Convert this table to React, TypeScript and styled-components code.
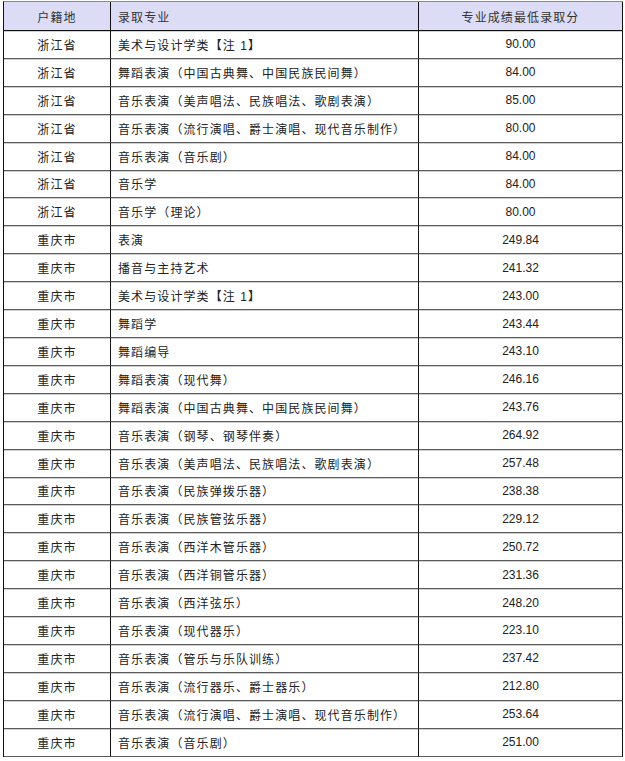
import React, { FC } from "react";
import styled, { createGlobalStyle } from "styled-components";

type Row = { place: string; major: string; score: string };

const ZJ = "浙江省";
const CQ = "重庆市";

const ROWS: Row[] = [
  { place: ZJ, major: "美术与设计学类【注 1】", score: "90.00" },
  { place: ZJ, major: "舞蹈表演（中国古典舞、中国民族民间舞）", score: "84.00" },
  { place: ZJ, major: "音乐表演（美声唱法、民族唱法、歌剧表演）", score: "85.00" },
  { place: ZJ, major: "音乐表演（流行演唱、爵士演唱、现代音乐制作）", score: "80.00" },
  { place: ZJ, major: "音乐表演（音乐剧）", score: "84.00" },
  { place: ZJ, major: "音乐学", score: "84.00" },
  { place: ZJ, major: "音乐学（理论）", score: "80.00" },
  { place: CQ, major: "表演", score: "249.84" },
  { place: CQ, major: "播音与主持艺术", score: "241.32" },
  { place: CQ, major: "美术与设计学类【注 1】", score: "243.00" },
  { place: CQ, major: "舞蹈学", score: "243.44" },
  { place: CQ, major: "舞蹈编导", score: "243.10" },
  { place: CQ, major: "舞蹈表演（现代舞）", score: "246.16" },
  { place: CQ, major: "舞蹈表演（中国古典舞、中国民族民间舞）", score: "243.76" },
  { place: CQ, major: "音乐表演（钢琴、钢琴伴奏）", score: "264.92" },
  { place: CQ, major: "音乐表演（美声唱法、民族唱法、歌剧表演）", score: "257.48" },
  { place: CQ, major: "音乐表演（民族弹拨乐器）", score: "238.38" },
  { place: CQ, major: "音乐表演（民族管弦乐器）", score: "229.12" },
  { place: CQ, major: "音乐表演（西洋木管乐器）", score: "250.72" },
  { place: CQ, major: "音乐表演（西洋铜管乐器）", score: "231.36" },
  { place: CQ, major: "音乐表演（西洋弦乐）", score: "248.20" },
  { place: CQ, major: "音乐表演（现代器乐）", score: "223.10" },
  { place: CQ, major: "音乐表演（管乐与乐队训练）", score: "237.42" },
  { place: CQ, major: "音乐表演（流行器乐、爵士器乐）", score: "212.80" },
  { place: CQ, major: "音乐表演（流行演唱、爵士演唱、现代音乐制作）", score: "253.64" },
  { place: CQ, major: "音乐表演（音乐剧）", score: "251.00" },
];

const GlobalStyle = createGlobalStyle`
  html, body {
    margin: 0;
    padding: 0;
    background: #ffffff;
  }
  body {
    font-family: "Liberation Sans", "Noto Sans CJK SC", sans-serif;
    font-size: 12px;
    color: #222;
  }
`;

const Page = styled.div`
  padding: 1px 0 0 3px;
`;

const Table = styled.table`
  width: 620px;
  table-layout: fixed;
  border-collapse: separate;
  border-spacing: 0;
  border-top: 1px solid #8a8a8a;
  border-left: 1px solid #111;
  box-shadow: 0 1px 0 #c4c4c4;
`;

const Col = styled.col<{ $w: number }>`
  width: ${(p) => p.$w}px;
`;

const HeadCell = styled.th<{ $align: "center" | "left" }>`
  height: 28px;
  padding: 0 0 0 ${(p) => (p.$align === "left" ? "7px" : "0")};
  background: #dcdcf6;
  font-weight: normal;
  text-align: ${(p) => p.$align};
  letter-spacing: 1.1px;
  color: #333;
  border-right: 1px solid #111;
  border-bottom: 1px solid #111;
`;

const Cell = styled.td<{ $align: "center" | "left"; $spaced?: boolean }>`
  height: 26.92px;
  padding: 0 0 0 ${(p) => (p.$align === "left" ? "7px" : "0")};
  text-align: ${(p) => p.$align};
  letter-spacing: ${(p) => (p.$spaced ? "1.1px" : "0")};
  white-space: nowrap;
  border-right: 1px solid #111;
  border-bottom: 1px solid #5c5c5c;
  box-shadow: inset 0 1px 0 #cfcfcf;
`;

const App: FC = () => (
  <>
    <GlobalStyle />
    <Page>
      <Table>
        <colgroup>
          <Col $w={107} />
          <Col $w={308} />
          <Col $w={204} />
        </colgroup>
        <thead>
          <tr>
            <HeadCell $align="center">户籍地</HeadCell>
            <HeadCell $align="left">录取专业</HeadCell>
            <HeadCell $align="center">专业成绩最低录取分</HeadCell>
          </tr>
        </thead>
        <tbody>
          {ROWS.map((r, i) => (
            <tr key={i}>
              <Cell $align="center" $spaced>
                {r.place}
              </Cell>
              <Cell $align="left" $spaced>
                {r.major}
              </Cell>
              <Cell $align="center">{r.score}</Cell>
            </tr>
          ))}
        </tbody>
      </Table>
    </Page>
  </>
);

export default App;
